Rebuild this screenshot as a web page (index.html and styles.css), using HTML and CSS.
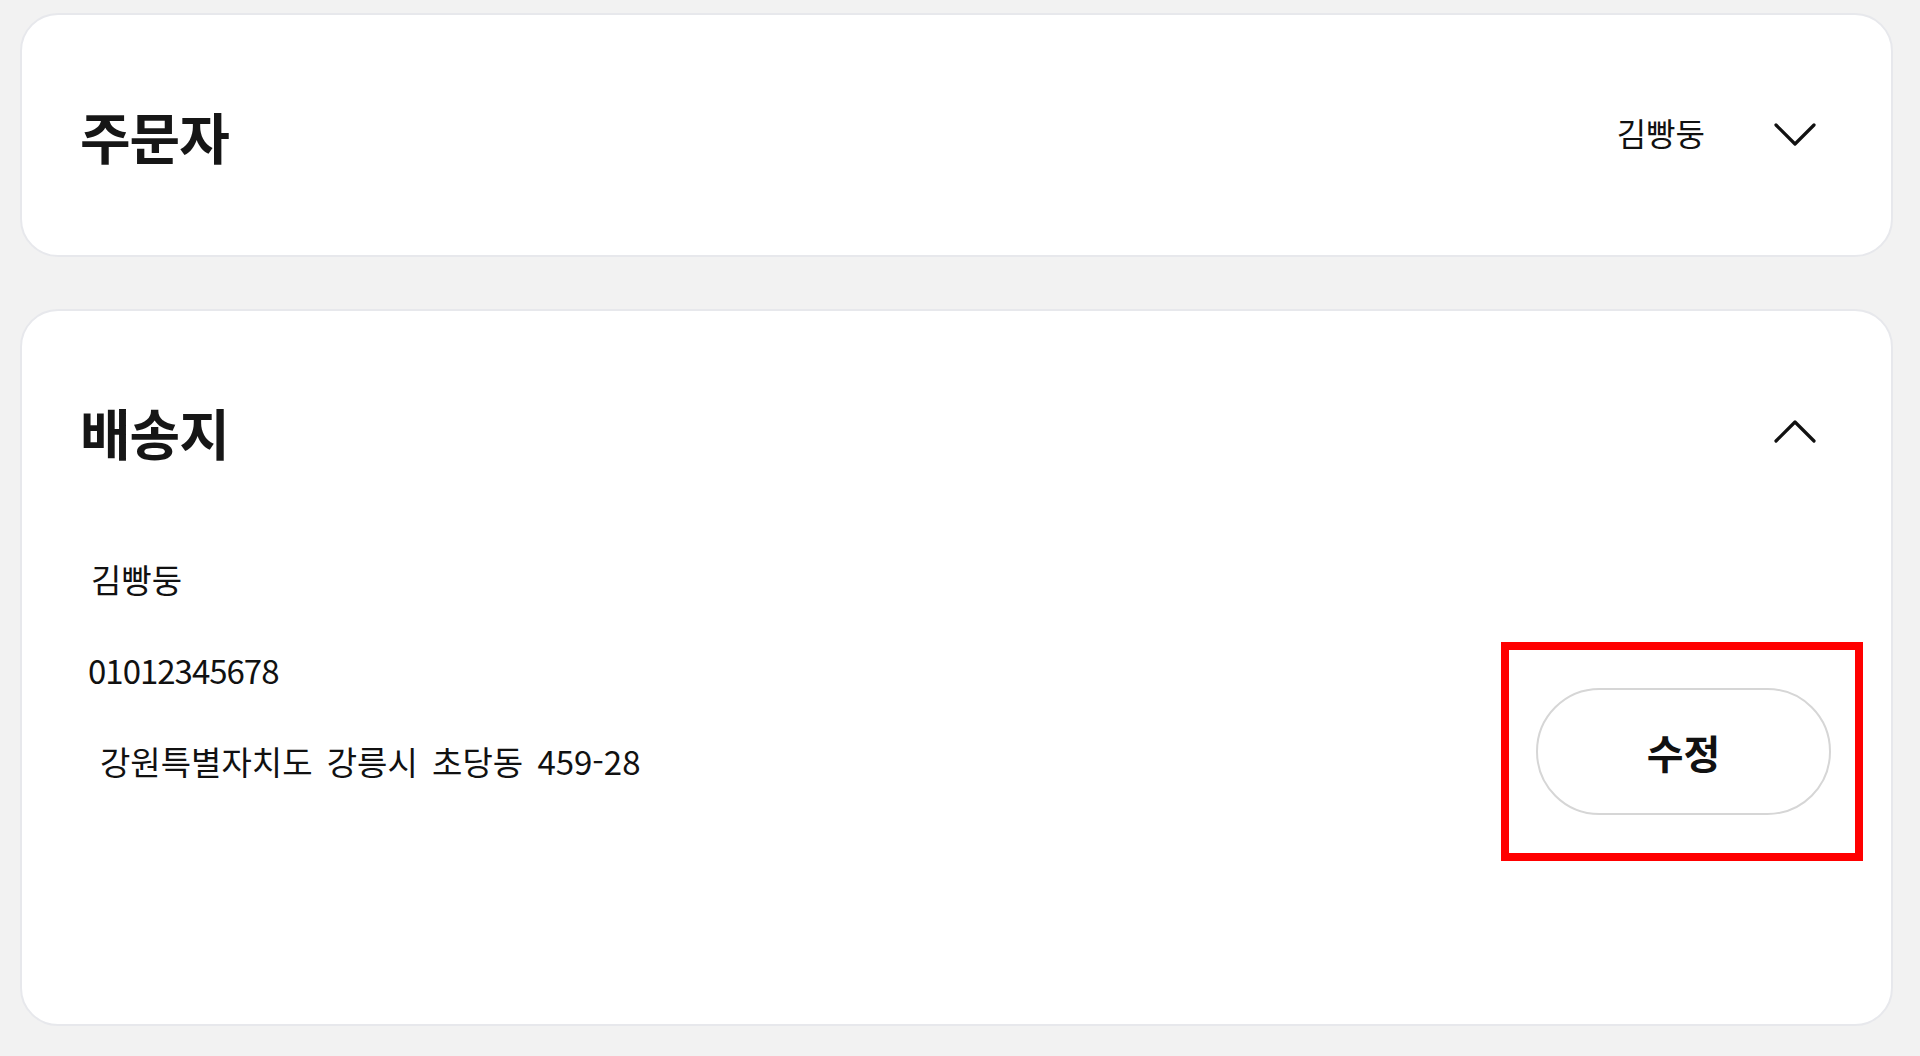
FILE: index.html
```html
<!DOCTYPE html>
<html lang="ko">
<head>
    <meta charset="UTF-8">
    <meta name="viewport" content="width=device-width, initial-scale=1.0">
    <title>주문서</title>
    <link rel="stylesheet" href="styles.css">
</head>
<body>

    <div class="page">
        <section class="card card-orderer">
            <div class="card-head">
                <h2>주문자</h2>
                <div class="head-right">
                    <span class="head-value">김빵둥</span>
                    <svg class="chevron" width="44" height="28" viewBox="0 0 44 28">
                        <polyline points="3,4 22,23 41,4" fill="none" stroke="#111" stroke-width="3.2" stroke-linecap="round" stroke-linejoin="round"/>
                    </svg>
                </div>
            </div>
        </section>

        <section class="card card-ship">
            <div class="card-head">
                <h2>배송지</h2>
                <div class="head-right">
                    <svg class="chevron" width="44" height="28" viewBox="0 0 44 28">
                        <polyline points="3,24 22,5 41,24" fill="none" stroke="#111" stroke-width="3.2" stroke-linecap="round" stroke-linejoin="round"/>
                    </svg>
                </div>
            </div>

            <div class="ship-body">
                <ul class="ship-info">
                    <li class="name">김빵둥</li>
                    <li class="phone">01012345678</li>
                    <li class="addr">강원특별자치도 강릉시 초당동 459-28</li>
                </ul>
                <div class="highlight">
                    <button type="button" class="edit-btn">수정</button>
                </div>
            </div>
        </section>
    </div>

</body>
</html>
```

FILE: styles.css
```css
body {
    margin: 0;
    padding: 0;
    background-color: #f2f2f2;
    font-family: "Noto Sans CJK KR", "Noto Sans", sans-serif;
    color: #111;
}

.page {
    display: flex;
    flex-direction: column;
    gap: 52px;
    padding: 13px 27px 30px 20px;
}

.card {
    background-color: #fff;
    border: 2px solid #e7e8ec;
    border-radius: 38px;
    box-sizing: border-box;
}

.card-orderer {
    height: 244px;
}

.card-ship {
    height: 717px;
}

.card-head {
    height: 240px;
    display: flex;
    align-items: center;
    justify-content: space-between;
    padding: 0 74px 0 58px;
}

h2 {
    margin: 0;
    font-size: 55px;
    font-weight: 700;
    letter-spacing: -1px;
    color: #161616;
}

.head-right {
    display: flex;
    align-items: center;
    gap: 68px;
}

.head-value {
    font-size: 32px;
    margin-top: -6px;
}

.chevron {
    display: block;
}

.ship-body {
    display: flex;
    justify-content: space-between;
    align-items: flex-start;
    padding: 5px 28px 0 66px;
}

.ship-info {
    list-style: none;
    margin: 0;
    padding: 0;
    display: flex;
    flex-direction: column;
    gap: 45px;
}

.ship-info li {
    font-size: 33px;
    line-height: 46px;
}

.ship-info .name {
    padding-left: 3px;
}

.ship-info .phone {
    letter-spacing: -1px;
}

.ship-info .addr {
    padding-left: 12px;
    word-spacing: 5px;
}

.highlight {
    margin-top: 86px;
    border: 8px solid #ff0000;
    padding: 38px 24px 38px 27px;
}

.edit-btn {
    display: block;
    width: 295px;
    height: 127px;
    background-color: #fff;
    border: 2px solid #d6d6d6;
    border-radius: 64px;
    font-family: "Noto Sans CJK KR", "Noto Sans", sans-serif;
    font-size: 40px;
    font-weight: 700;
    color: #111;
    cursor: pointer;
}
```
